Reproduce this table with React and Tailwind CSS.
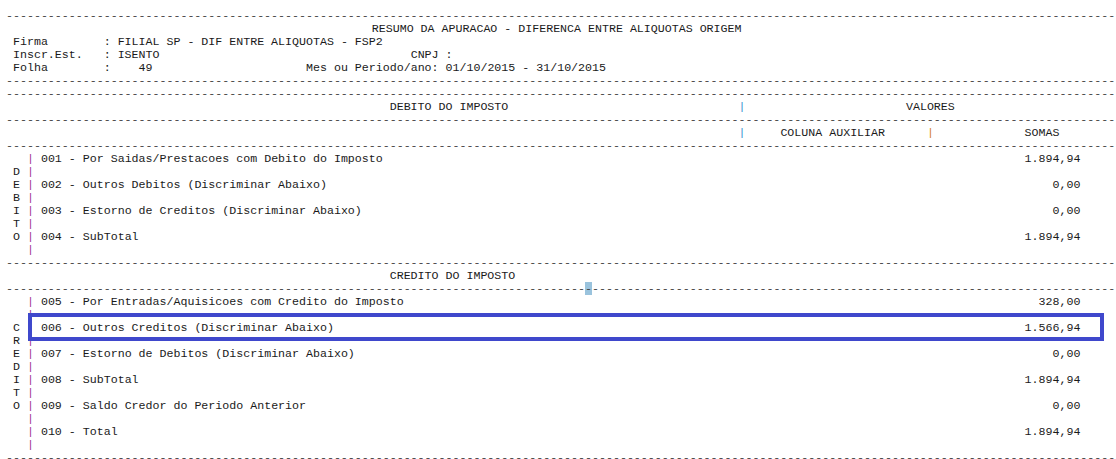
import React from "react";

const END = 154;
const DASHES = "-".repeat(159);

// builds one monospace line from pieces placed at fixed columns
const buildLine = (parts) => {
  const out = [];
  let pos = 0;
  parts.forEach((p, i) => {
    const col = p.right ? p.right - p.text.length : p.col;
    if (col > pos) out.push(" ".repeat(col - pos));
    out.push(
      p.cls ? (
        <span key={i} className={p.cls}>
          {p.text}
        </span>
      ) : (
        p.text
      )
    );
    pos = col + p.text.length;
  });
  return out;
};

const Bar = "text-[#a3348f]";

const Line = ({ parts }) => (
  <div className="h-[13px] whitespace-pre">{buildLine(parts)}</div>
);

const Dash = () => <div className="h-[13px] whitespace-pre text-[#444]">{DASHES}</div>;

const Item = ({ letter = " ", label, value }) => {
  const parts = [
    { col: 1, text: letter },
    { col: 3, text: "|", cls: Bar },
  ];
  if (label) parts.push({ col: 5, text: label });
  if (value) parts.push({ right: END, text: value });
  return <Line parts={parts} />;
};

export default function App() {
  return (
    <div className="relative w-[1116px] h-[459px] overflow-hidden bg-white pl-[6px] pt-[9px] font-['Liberation_Mono',monospace] text-[11.63px] leading-[13px] text-[#1a1a1a]">
      <Dash />
      <Line parts={[{ col: 52, text: "RESUMO DA APURACAO - DIFERENCA ENTRE ALIQUOTAS ORIGEM", cls: "ml-[3px]" }]} />
      <Line
        parts={[
          { col: 1, text: "Firma" },
          { col: 14, text: ": FILIAL SP - DIF ENTRE ALIQUOTAS - FSP2" },
        ]}
      />
      <Line
        parts={[
          { col: 1, text: "Inscr.Est." },
          { col: 14, text: ": ISENTO" },
          { col: 58, text: "CNPJ :" },
        ]}
      />
      <Line
        parts={[
          { col: 1, text: "Folha" },
          { col: 14, text: ":    49" },
          { col: 43, text: "Mes ou Periodo/ano: 01/10/2015 - 31/10/2015" },
        ]}
      />
      <Dash />
      <Dash />
      <Line
        parts={[
          { col: 55, text: "DEBITO DO IMPOSTO" },
          { col: 105, text: "|", cls: "text-[#3d8ed0]" },
          { col: 129, text: "VALORES" },
        ]}
      />
      <Dash />
      <Line
        parts={[
          { col: 105, text: "|", cls: "text-[#3d8ed0]" },
          { col: 111, text: "COLUNA AUXILIAR" },
          { col: 132, text: "|", cls: "text-[#d2822f]" },
          { col: 146, text: "SOMAS" },
        ]}
      />
      <Dash />

      <Item label="001 - Por Saidas/Prestacoes com Debito do Imposto" value="1.894,94" />
      <Item letter="D" />
      <Item letter="E" label="002 - Outros Debitos (Discriminar Abaixo)" value="0,00" />
      <Item letter="B" />
      <Item letter="I" label="003 - Estorno de Creditos (Discriminar Abaixo)" value="0,00" />
      <Item letter="T" />
      <Item letter="O" label="004 - SubTotal" value="1.894,94" />
      <Item />
      <Dash />
      <Line parts={[{ col: 55, text: "CREDITO DO IMPOSTO" }]} />
      <div className="h-[13px] whitespace-pre text-[#444]">
        {"-".repeat(83)}
        <span className="bg-[#9ac3dd]">-</span>
        {"-".repeat(75)}
      </div>

      <Item label="005 - Por Entradas/Aquisicoes com Credito do Imposto" value="328,00" />
      <Item />
      <Item letter="C" label="006 - Outros Creditos (Discriminar Abaixo)" value="1.566,94" />
      <Item letter="R" />
      <Item letter="E" label="007 - Estorno de Debitos (Discriminar Abaixo)" value="0,00" />
      <Item letter="D" />
      <Item letter="I" label="008 - SubTotal" value="1.894,94" />
      <Item letter="T" />
      <Item letter="O" label="009 - Saldo Credor do Periodo Anterior" value="0,00" />
      <Item />
      <Item label="010 - Total" value="1.894,94" />
      <Item />
      <Dash />

      {/* highlight box drawn over row 006 */}
      <div className="absolute left-[28px] top-[313px] w-[1076px] h-[28px] border-4 border-[#3f48cc]" />
    </div>
  );
}
